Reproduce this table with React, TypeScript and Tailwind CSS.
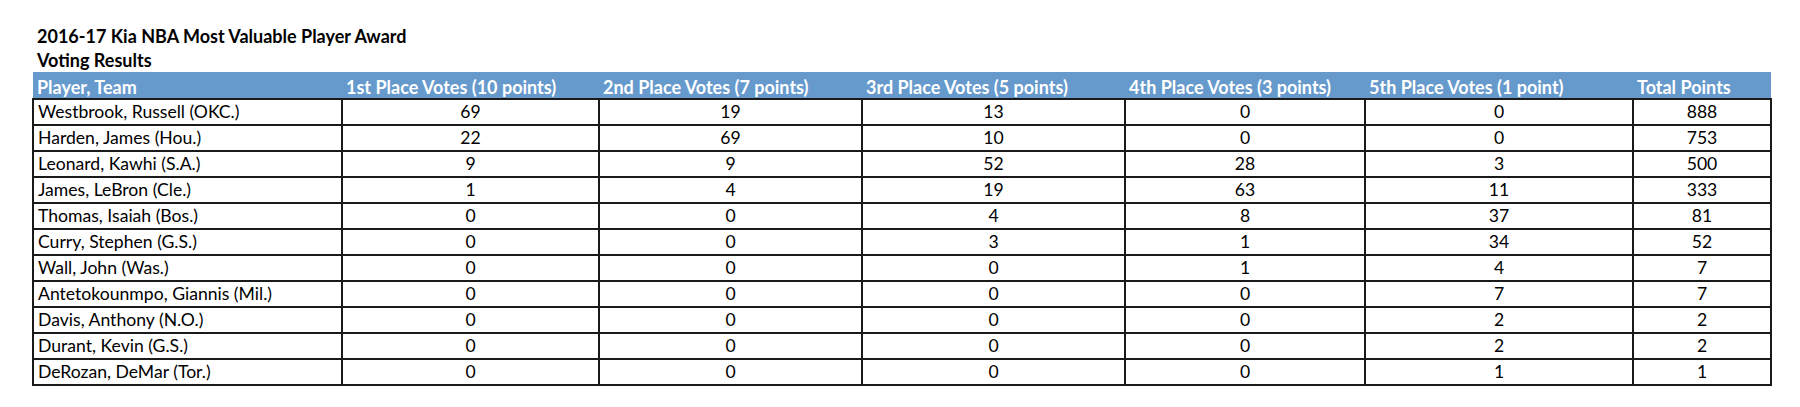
const rows: [string, number, number, number, number, number, number][] = [
  ['Westbrook, Russell (OKC.)', 69, 19, 13, 0, 0, 888],
  ['Harden, James (Hou.)', 22, 69, 10, 0, 0, 753],
  ['Leonard, Kawhi (S.A.)', 9, 9, 52, 28, 3, 500],
  ['James, LeBron (Cle.)', 1, 4, 19, 63, 11, 333],
  ['Thomas, Isaiah (Bos.)', 0, 0, 4, 8, 37, 81],
  ['Curry, Stephen (G.S.)', 0, 0, 3, 1, 34, 52],
  ['Wall, John (Was.)', 0, 0, 0, 1, 4, 7],
  ['Antetokounmpo, Giannis (Mil.)', 0, 0, 0, 0, 7, 7],
  ['Davis, Anthony (N.O.)', 0, 0, 0, 0, 2, 2],
  ['Durant, Kevin (G.S.)', 0, 0, 0, 0, 2, 2],
  ['DeRozan, DeMar (Tor.)', 0, 0, 0, 0, 1, 1],
]

const headers = [
  'Player, Team',
  '1st Place Votes (10 points)',
  '2nd Place Votes (7 points)',
  '3rd Place Votes (5 points)',
  '4th Place Votes (3 points)',
  '5th Place Votes (1 point)',
  'Total Points',
]

export default function App() {
  return (
    <div className="min-h-[407px] bg-white pt-[24px] pl-[32px] font-['Lato','Open_Sans',sans-serif] text-[17.6px] text-black">
      <div className="pl-[5px] text-[18px] font-bold leading-[24px]">2016-17 Kia NBA Most Valuable Player Award</div>
      <div className="pl-[5px] text-[18px] font-bold leading-[24px]">Voting Results</div>
      <table className="w-[1738px] table-fixed border-collapse">
        <colgroup>
          <col className="w-[309px]" />
          <col className="w-[257px]" />
          <col className="w-[263px]" />
          <col className="w-[263px]" />
          <col className="w-[240px]" />
          <col className="w-[268px]" />
          <col className="w-[138px]" />
        </colgroup>
        <thead>
          <tr className="h-[27px] bg-[#6699cc]">
            {headers.map((h) => (
              <th key={h} className="p-0 pt-[3px] pl-[4px] text-left text-[18px] font-bold leading-[22px] text-white">
                {h}
              </th>
            ))}
          </tr>
        </thead>
        <tbody>
          {rows.map(([name, ...nums]) => (
            <tr key={name} className="h-[26px]">
              <td className="border-2 border-[#1a1a1a] py-0 pl-[4px] leading-[22px]">{name}</td>
              {nums.map((n, i) => (
                <td key={i} className="border-2 border-[#1a1a1a] py-0 text-center leading-[22px]">
                  {n}
                </td>
              ))}
            </tr>
          ))}
        </tbody>
      </table>
    </div>
  )
}
